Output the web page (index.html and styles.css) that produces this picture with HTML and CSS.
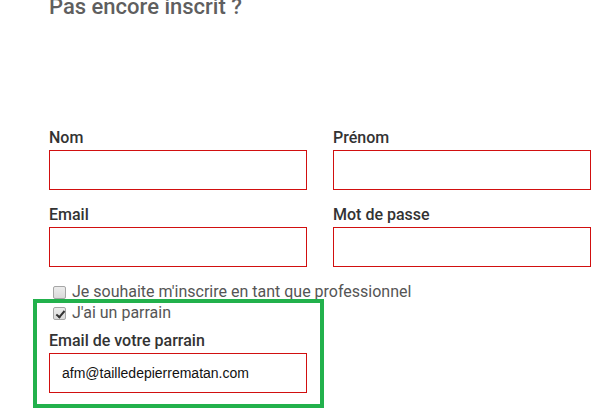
FILE: index.html
```html
<!DOCTYPE html>
<html lang="fr">
<head>
    <meta charset="UTF-8">
    <meta name="viewport" content="width=device-width, initial-scale=1.0">
    <title>Inscription</title>
    <link rel="stylesheet" href="styles.css">
</head>
<body>
    <div class="register">
        <h2 class="register-title">Pas encore inscrit ?</h2>

        <div class="form-grid">
            <div class="field">
                <label class="field-label" for="nom">Nom</label>
                <input class="field-input" id="nom" type="text">
            </div>
            <div class="field">
                <label class="field-label" for="prenom">Prénom</label>
                <input class="field-input" id="prenom" type="text">
            </div>
            <div class="field">
                <label class="field-label" for="email">Email</label>
                <input class="field-input" id="email" type="email">
            </div>
            <div class="field">
                <label class="field-label" for="password">Mot de passe</label>
                <input class="field-input" id="password" type="password">
            </div>
        </div>

        <div class="options">
            <label class="check-row">
                <input class="check" type="checkbox"> Je souhaite m'inscrire en tant que professionnel
            </label>

            <div class="highlight">
                <label class="check-row">
                    <input class="check" type="checkbox" checked> J'ai un parrain
                </label>
                <div class="field sponsor">
                    <label class="field-label" for="sponsor">Email de votre parrain</label>
                    <input class="field-input" id="sponsor" type="email" value="afm@tailledepierrematan.com">
                </div>
            </div>
        </div>
    </div>
</body>
</html>
```

FILE: styles.css
```css
* {
    margin: 0;
    padding: 0;
    box-sizing: border-box;
}

html,
body {
    min-height: 100vh;
}

body {
    font-family: Roboto, "Liberation Sans", Arial, sans-serif;
    background: #ffffff;
    color: #333333;
    overflow: hidden;
    padding-top: 1px;
}

.register {
    padding-left: 49px;
    padding-bottom: 24px;
    width: 591px;
}

.register-title {
    margin-top: -7px;
    font-size: 22px;
    line-height: 26px;
    font-weight: 500;
    color: #5f5f5f;
}

.form-grid {
    margin-top: 108px;
    display: grid;
    grid-template-columns: 258px 258px;
    column-gap: 26px;
    row-gap: 15px;
}

.field {
    display: flex;
    flex-direction: column;
}

.field-label {
    font-size: 16px;
    line-height: 20px;
    font-weight: 500;
    color: #333333;
    margin-bottom: 2px;
}

.field-input {
    height: 40px;
    width: 258px;
    border: 1px solid #d10f0f;
    background: #ffffff;
    padding: 0 12px;
    font-family: "Liberation Sans", Arial, sans-serif;
    font-size: 14px;
    color: #111111;
    outline: none;
}

.options {
    margin-top: 14px;
}

.check-row {
    display: block;
    font-size: 16px;
    line-height: 21px;
    color: #555555;
}

.check {
    appearance: none;
    -webkit-appearance: none;
    position: relative;
    width: 13px;
    height: 13px;
    margin: 0 2px 0 4px;
    vertical-align: -2px;
    border: 1px solid #a6a6a6;
    border-radius: 2px;
    background: linear-gradient(#ececec, #dadada);
}

.check:checked::after {
    content: "";
    position: absolute;
    left: 4px;
    top: 1px;
    width: 3px;
    height: 7px;
    border: solid #333333;
    border-width: 0 2px 2px 0;
    transform: rotate(40deg);
}

.sponsor {
    margin-top: 8px;
}

/* annotation frame around the sponsor block */
.highlight {
    position: relative;
    width: 258px;
}

.highlight::after {
    content: "";
    position: absolute;
    top: -3px;
    left: -16px;
    right: -17px;
    bottom: -15px;
    border: 4px solid #22b14c;
    pointer-events: none;
}
```
